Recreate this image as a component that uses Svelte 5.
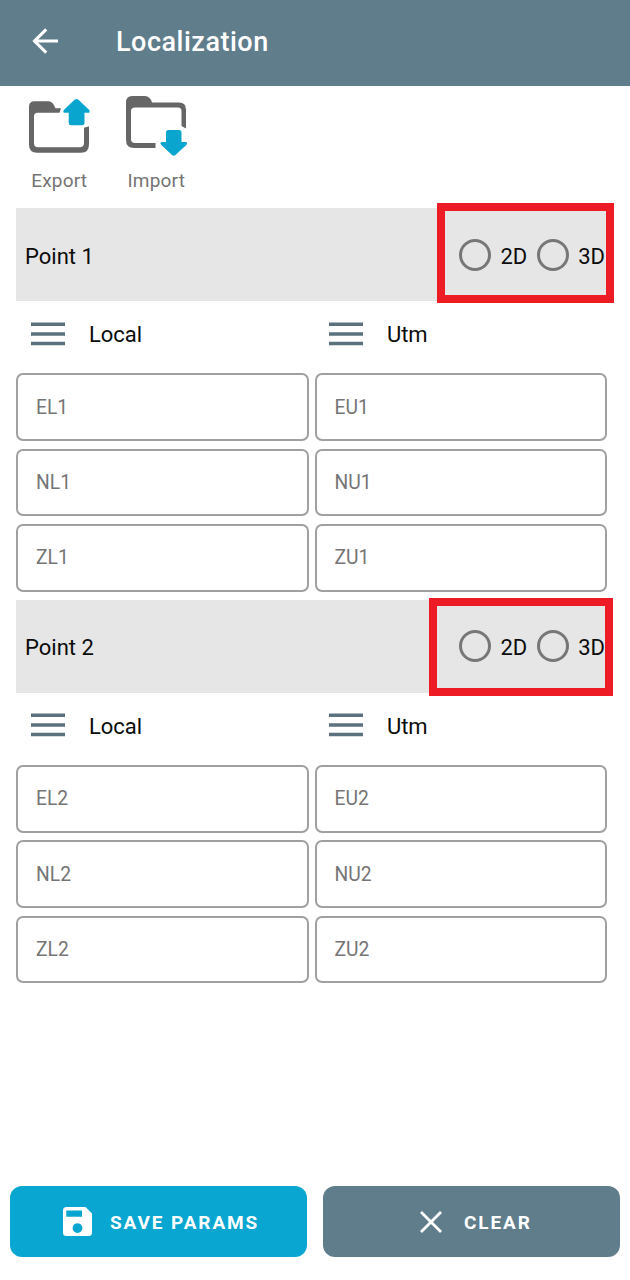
<script>
  const points = [1, 2];
  const axes = ['E', 'N', 'Z'];
  const systems = [
    { name: 'Local', code: 'L' },
    { name: 'Utm', code: 'U' },
  ];
</script>

<div class="screen">
  <header>
    <svg class="back" width="28" height="28" viewBox="0 0 28 28">
      <path d="M26 14H3M14.200 2.300L2.500 14l11.700 11.700" fill="none" stroke="#fff" stroke-width="3.100" />
    </svg>
    <h1>Localization</h1>
  </header>

  <nav>
    <button class="tool">
      <svg width="64" height="60" viewBox="0 -1.200 64 60">
        <path
          d="M1 9.500Q1 4 6.500 4H20Q24 4 26 8L27.500 11H33L31.500 15.500H9.500Q6 15.500 6 19V46Q6 50 10 50H51.500Q56 50 56 45.500V30.500L61 29V47Q61 55.500 53 55.500H9Q1 55.500 1 47.500Z"
          fill="#666"
        />
        <path
          d="M46.800 2.400Q48.500 1 50.200 2.400L61 12.500Q62.800 15.600 60 15.600H56.500V25.500Q56.500 28 54 28H43Q40.700 28 40.700 25.500V15.600H37Q34.200 15.600 36 12.500Z"
          fill="#0aa5cf"
        />
      </svg>
      <span>Export</span>
    </button>
    <button class="tool">
      <svg width="64" height="60" viewBox="0 0 64 60">
        <path
          d="M1 6.500Q1 0 7 0H20Q25 0 27 6.500H54Q61 6.500 61 13.500V32.500L56.500 30V15Q56.500 11.500 53 11.500H10Q6 11.500 6 15V43Q6 47 10 47H30.500V52H9Q1 52 1 44Z"
          fill="#666"
        />
        <path
          d="M43.500 34H54Q56.500 34 56.500 36.500V46H60Q63.500 46 61.300 49L50.500 59Q48.800 60.400 47 59L36.300 49Q34 46 37.500 46H41V36.500Q41 34 43.500 34Z"
          fill="#0aa5cf"
        />
      </svg>
      <span>Import</span>
    </button>
  </nav>

  <main>
    {#each points as n}
      <section>
        <div class="band">
          <h2>Point {n}</h2>
          <div class="modes">
            {#each ['2D', '3D'] as mode}
              <span class="mode"><i class="ring"></i>{mode}</span>
            {/each}
          </div>
          <div class="highlight h{n}"></div>
        </div>
        <div class="systems">
          {#each systems as s}
            <div class="system">
              <svg width="34" height="24" viewBox="0 0 34 24">
                <path d="M0 2.300H34M0 11.900H34M0 21.500H34" stroke="#5b717e" stroke-width="3.500" />
              </svg>
              <span>{s.name}</span>
            </div>
          {/each}
        </div>
        <div class="grid">
          {#each axes as axis}
            {#each systems as s}
              <div class="field">{axis}{s.code}{n}</div>
            {/each}
          {/each}
        </div>
      </section>
    {/each}
  </main>

  <footer>
    <button class="action save">
      <svg width="29" height="29" viewBox="0 0 29 29">
        <path
          fill-rule="evenodd"
          d="M3.500 0H22.500L29 6.500V25.500Q29 29 25.500 29H3.500Q0 29 0 25.500V3.500Q0 0 3.500 0ZM3.300 3.500V9.700H19V3.500ZM14.500 16.200a4.900 4.900 0 1 0 .01 0Z"
          fill="#fff"
        />
      </svg>
      <span>SAVE PARAMS</span>
    </button>
    <button class="action clear">
      <svg width="22" height="22" viewBox="0 0 22 22">
        <path d="M1 1L21 21M21 1L1 21" stroke="#fff" stroke-width="2.800" />
      </svg>
      <span>CLEAR</span>
    </button>
  </footer>
</div>

<style>
  :global(body) {
    background: #fff;
  }
  .screen {
    box-sizing: border-box;
    width: 630px;
    height: 1280px;
    display: flex;
    flex-direction: column;
    font-family: Roboto, sans-serif;
    color: #0c0c0c;
    overflow: hidden;
  }
  button {
    border: 0;
    padding: 0;
    background: none;
    font-family: inherit;
  }
  header {
    height: 86px;
    flex: none;
    box-sizing: border-box;
    padding: 0 0 4px 32px;
    display: flex;
    align-items: center;
    gap: 56px;
    background: #607d8b;
    color: #fff;
  }
  h1 {
    margin: 0;
    font-size: 27px;
    font-weight: 500;
    letter-spacing: 0.5px;
    line-height: 32px;
    padding-top: 2px;
  }
  nav {
    height: 122px;
    flex: none;
    box-sizing: border-box;
    padding: 10px 0 0 28px;
    display: flex;
    gap: 33px;
  }
  .tool {
    width: 64px;
    display: flex;
    flex-direction: column;
    align-items: center;
    font-size: 19px;
    color: #747474;
    letter-spacing: 0.2px;
  }
  .tool span {
    line-height: 24px;
    margin-top: 13px;
    margin-right: 1.500px;
  }
  main {
    padding: 0 23px 0 16px;
    flex: 1;
  }
  section {
    height: 391.6px;
  }
  .band {
    position: relative;
    height: 93.4px;
    background: #e6e6e6;
    display: flex;
    align-items: center;
    justify-content: space-between;
    padding: 0 2px 0 9px;
  }
  h2 {
    margin: 0;
    font-size: 22px;
    font-weight: 400;
    line-height: 28px;
    padding-top: 4px;
  }
  .modes {
    display: flex;
    gap: 9.500px;
    font-size: 22px;
  }
  .mode {
    display: flex;
    align-items: center;
    gap: 9.500px;
    line-height: 28px;
    padding-top: 4px;
  }
  .ring {
    width: 26px;
    height: 26px;
    border: 3px solid #777;
    border-radius: 50%;
    margin-top: -4px;
  }
  .highlight {
    position: absolute;
    box-sizing: border-box;
    border: 8px solid #ed1c24;
  }
  .h1 {
    left: 421px;
    top: -5px;
    width: 177px;
    height: 100px;
  }
  .h2 {
    left: 413px;
    top: -1.6px;
    width: 184px;
    height: 98px;
  }
  .systems {
    height: 71.8px;
    display: grid;
    grid-template-columns: 1fr 1fr;
    column-gap: 5px;
    font-size: 22px;
  }
  .system {
    height: 65px;
    padding-left: 15.400px;
    display: flex;
    align-items: center;
    gap: 23.500px;
    line-height: 28px;
  }
  .system span {
    padding-top: 3px;
  }
  .grid {
    display: grid;
    grid-template-columns: 1fr 1fr;
    gap: 7.6px 6px;
  }
  .field {
    height: 67.8px;
    box-sizing: border-box;
    border: 2px solid #a0a0a0;
    border-radius: 7px;
    padding-left: 18px;
    display: flex;
    align-items: center;
    font-size: 19.3px;
    color: #757575;
  }
  footer {
    display: grid;
    grid-template-columns: 1fr 1fr;
    gap: 16px;
    padding: 0 10px 23px;
  }
  .action {
    box-sizing: border-box;
    height: 71px;
    border-radius: 12px;
    display: flex;
    align-items: center;
    color: #fff;
    font-size: 19px;
    font-weight: 700;
    letter-spacing: 1.9px;
  }
  .action span {
    padding-top: 1px;
  }
  .save {
    background: #08a6d0;
    padding-left: 53px;
    gap: 18px;
  }
  .clear {
    background: #607d8b;
    padding-left: 97px;
    gap: 22px;
  }
</style>
